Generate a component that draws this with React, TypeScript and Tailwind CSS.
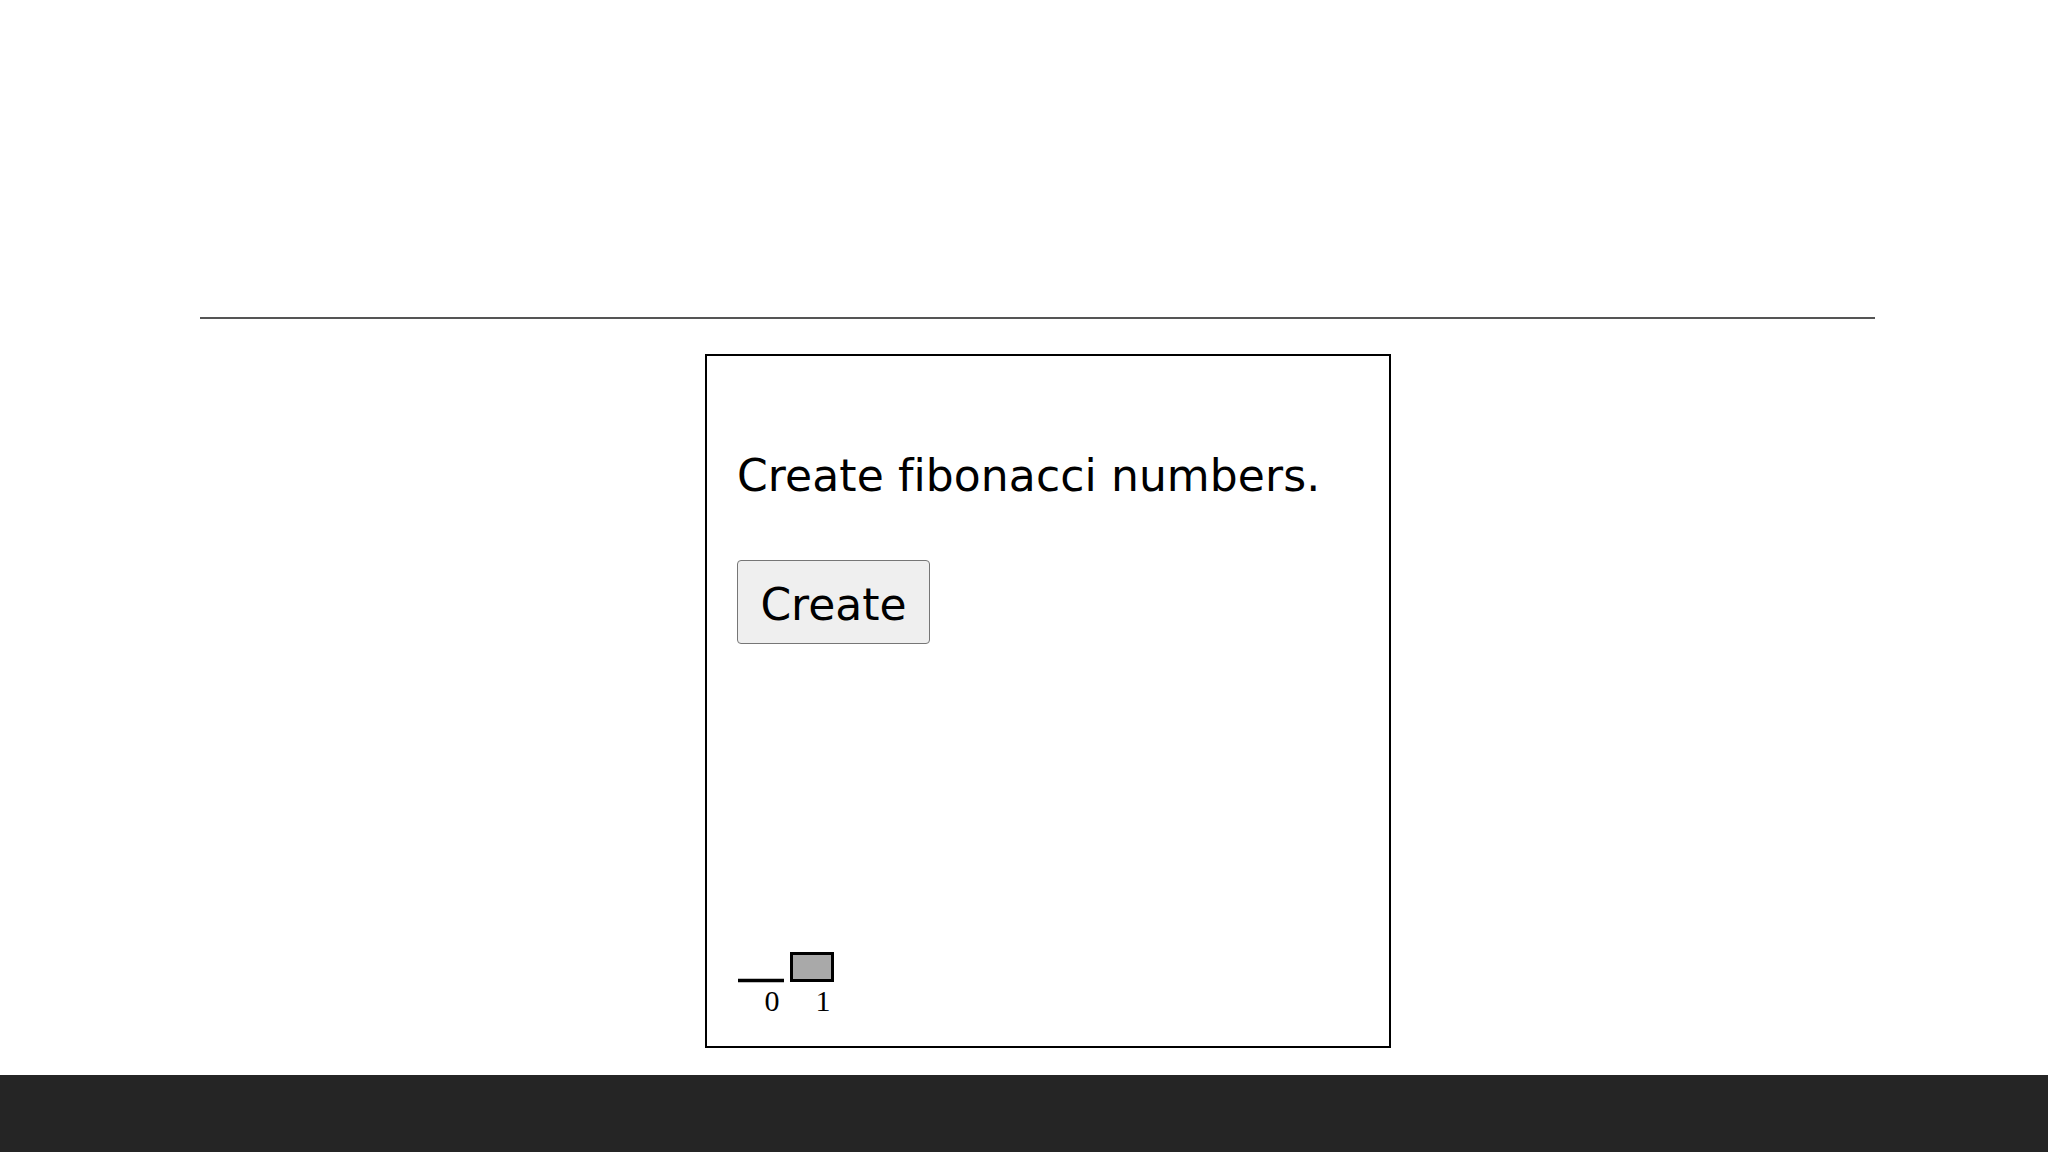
import React from 'react';

const bars = [
  { label: '0', value: 0 },
  { label: '1', value: 1 },
];

function FibChart() {
  return (
    <svg width="120" height="70" viewBox="0 0 120 70" className="block">
      {/* bar for 0: zero height, shown as a thick baseline stroke */}
      <line x1="1" y1="33.5" x2="47" y2="33.5" stroke="#000" strokeWidth="3.5" />
      <rect x="54.5" y="6.5" width="41" height="27" fill="#a9a9a9" stroke="#000" strokeWidth="3" />
      {bars.map((b, i) => (
        <text
          key={b.label}
          x={i === 0 ? 35 : 86}
          y="63.5"
          textAnchor="middle"
          fontSize="30"
          fontFamily="'Liberation Serif', 'Times New Roman', serif"
          fill="#000"
        >
          {b.label}
        </text>
      ))}
    </svg>
  );
}

export default function App() {
  return (
    <div className="w-full h-[1152px] flex flex-col bg-white overflow-hidden font-['DejaVu_Sans',_Verdana,_sans-serif] text-black [font-variant-ligatures:none]">
      <div className="pt-[317px]">
        <div className="ml-[200px] w-[1675px] h-[2px] bg-[#555555]" />
      </div>

      <div className="mt-[35px] ml-[705px] w-[686px] h-[694px] border-2 border-black flex flex-col pl-[30px] pt-[94px]">
        <p className="text-[44px] leading-[52px] tracking-[0.1px]">Create fibonacci numbers.</p>

        <button className="mt-[58px] w-[193px] h-[84px] border border-[#767676] rounded-[4px] bg-[#efefef] text-[44px] leading-[51px] pt-[18px] pb-[13px] text-center">
          Create
        </button>

        <div className="mt-[303px]">
          <FibChart />
        </div>
      </div>

      <div className="mt-[27px] flex-1 bg-[#252525]" />
    </div>
  );
}
